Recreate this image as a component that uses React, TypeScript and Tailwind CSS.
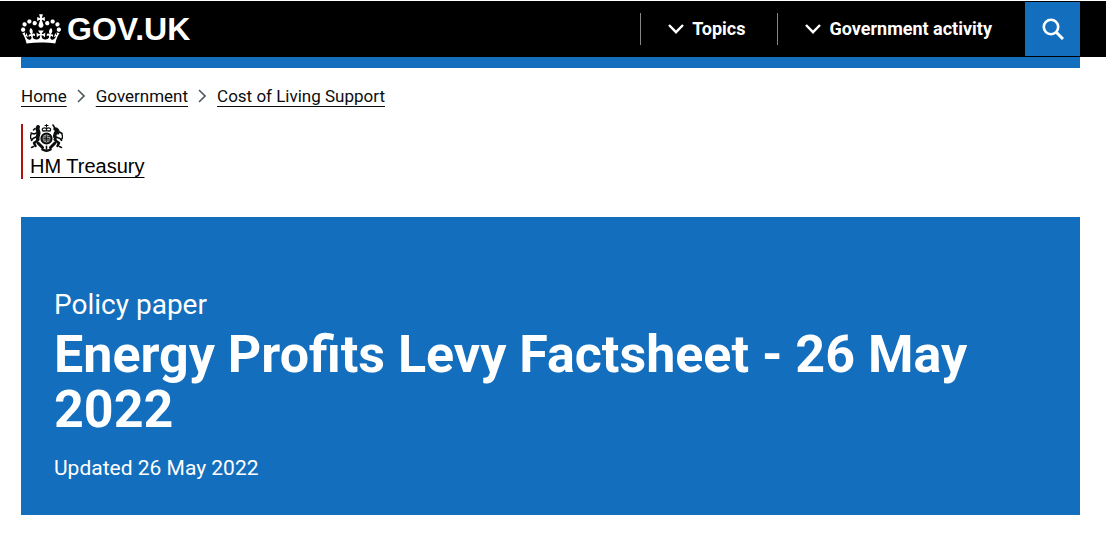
import type { ReactNode } from "react";

const CrownLogo = () => (
  <svg
    viewBox="0 0 132 97"
    className="w-10 h-[30px] shrink-0"
    fill="currentColor"
    aria-hidden="true"
  >
    <path d="M25 30.2c3.5 1.5 7.7-.2 9.1-3.7 1.5-3.6-.2-7.8-3.9-9.2-3.6-1.4-7.6.3-9.1 3.9-1.4 3.5.3 7.5 3.9 9zM9 39.5c3.6 1.5 7.8-.2 9.2-3.7 1.5-3.6-.2-7.8-3.9-9.1-3.6-1.5-7.6.2-9.1 3.8-1.4 3.5.3 7.5 3.8 9zM4.4 57.2c3.5 1.5 7.7-.2 9.1-3.8 1.5-3.6-.2-7.7-3.9-9.1-3.5-1.5-7.6.3-9.1 3.8-1.4 3.5.3 7.6 3.9 9.1zm38.3-21.4c3.5 1.5 7.7-.2 9.1-3.8 1.5-3.6-.2-7.7-3.9-9.1-3.6-1.5-7.6.3-9.1 3.8-1.3 3.6.4 7.7 3.9 9.1zm64.4-5.6c-3.6 1.5-7.8-.2-9.1-3.7-1.5-3.6.2-7.8 3.8-9.2 3.6-1.4 7.7.3 9.2 3.9 1.3 3.5-.4 7.5-3.9 9zm15.9 9.3c-3.6 1.5-7.7-.2-9.1-3.7-1.5-3.6.2-7.8 3.7-9.1 3.6-1.5 7.7.2 9.2 3.8 1.5 3.5-.3 7.5-3.8 9zm4.7 17.7c-3.6 1.5-7.8-.2-9.2-3.8-1.5-3.6.2-7.7 3.9-9.1 3.6-1.5 7.7.3 9.2 3.8 1.3 3.5-.4 7.6-3.9 9.1zM89.3 35.8c-3.6 1.5-7.8-.2-9.2-3.8-1.4-3.6.2-7.7 3.9-9.1 3.6-1.5 7.7.3 9.2 3.8 1.4 3.6-.3 7.7-3.9 9.1zM69.7 17.7l8.9 4.7V9.3l-8.9 2.8c-.2-.3-.5-.6-.9-.9L72.4 0H59.6l3.5 11.2c-.3.3-.6.5-.9.9l-8.8-2.8v13.1l8.8-4.7c.3.3.6.7.9.9l-5 15.4v.1c-.2.8-.4 1.6-.4 2.4 0 4.1 3.1 7.5 7 8.1h.2c.3 0 .7.1 1 .1.4 0 .7 0 1-.1h.2c4-.6 7.1-4.1 7.1-8.1 0-.8-.1-1.7-.4-2.4V34l-5.1-15.4c.4-.2.7-.6 1-.9zM66 92.8c16.9 0 32.8 1.1 47.1 3.2 4-16.9 8.9-26.7 14-33.5l-9.6-3.4c1 4.9 1.1 7.2 0 10.2-1.5-1.4-3-4.3-4.2-8.7L108.6 76c2.8-2 5-3.2 7.5-3.3-4.4 9.4-10 11.9-13.6 11.2-4.3-.8-6.3-4.6-5.6-7.9 1-4.7 5.7-5.9 8-.5 4.3-8.7-3-11.4-7.6-8.8 7.1-7.2 7.9-13.5 2.1-21.1-8 6.1-8.1 12.3-4.5 20.8-4.7-5.4-12.1-2.5-9.5 6.2 3.4-5.2 7.9-2 7.2 3.1-.6 4.3-6.4 7.8-13.5 7.2-10.3-.9-10.9-8-11.2-13.8 2.5-.5 7.1 1.8 11 7.3L80.2 60c-4.1 4.4-8 5.3-12.3 5.4 1.4-4.4 8-11.6 8-11.6H55.5s6.4 7.2 7.9 11.6c-4.2-.1-8-1-12.3-5.4l1.4 16.4c3.9-5.5 8.5-7.7 10.9-7.3-.3 5.8-.9 12.8-11.1 13.8-7.2.6-12.9-2.9-13.5-7.2-.7-5 3.8-8.3 7.1-3.1 2.7-8.7-4.6-11.6-9.4-6.2 3.7-8.5 3.6-14.7-4.6-20.8-5.8 7.6-5 13.9 2.2 21.1-4.7-2.6-11.9.1-7.7 8.8 2.3-5.5 7.1-4.2 8.1.5.7 3.3-1.3 7.1-5.7 7.9-3.5.7-9-1.8-13.5-11.2 2.5.1 4.7 1.3 7.5 3.3l-4.7-15.4c-1.2 4.4-2.7 7.2-4.3 8.7-1.1-3-.9-5.3 0-10.2l-9.5 3.4c5 6.9 9.9 16.7 14 33.5 14.8-2.1 30.8-3.2 47.7-3.2z" />
  </svg>
);

// lion and unicorn either side of the shield, crown on top
const RoyalCrest = () => (
  <svg viewBox="0 0 66 56" className="w-[33px] h-7" aria-hidden="true">
    <g fill="none" stroke="#0b0c0c" strokeLinecap="round" strokeLinejoin="round">
      {/* lion */}
      <path strokeWidth="8" d="M16 6c-3 5 1 7 1 12-1 4-2 8-1 12" />
      <path strokeWidth="3" d="M10 9l-3 3M15 17l-7 3-6-2M14 25l-8 4-3 4M2 21c-2 4-1 8 2 11" />
      <path strokeWidth="5" d="M15 33l-7 5 3 6" />
      <path strokeWidth="3" d="M7 45l-4 2" />
      {/* unicorn */}
      <path strokeWidth="7" d="M50 10c5 0 4 4 1 8-2 4-2 8-1 12" />
      <path strokeWidth="3" d="M49 7l-3-5M56 11c3 4 2 7 0 9M51 19l8-3 5 3M52 26l8 3 3 4M64 21c2 4 1 8-2 11" />
      <path strokeWidth="5" d="M51 33l7 5-3 6" />
      <path strokeWidth="3" d="M59 45l4 2" />
      {/* motto ribbon */}
      <path strokeWidth="6" d="M16 38l9 9M50 38l-9 9" />
      <path strokeWidth="5" d="M25 51c5 3 11 3 16 0" />
      <path strokeWidth="3" d="M33 44v6" />
      {/* crown */}
      <path strokeWidth="2" d="M33 1v5M30 3h6" />
      <path strokeWidth="2.6" d="M26 14c-4-5 2-8 7-5 5-3 11 0 7 5zM33 9v5" />
      {/* shield and garter */}
      <circle cx="33" cy="29" r="13" stroke="#ffffff" strokeWidth="2" fill="#ffffff" />
      <circle cx="33" cy="29" r="10" strokeWidth="4.4" fill="#9a9a9a" />
      <path strokeWidth="1.6" d="M28 26h3M36 25h3M28 32h3M35 32h4M33 23v12M28 29h10" />
    </g>
  </svg>
);

const breadcrumbs = ["Home", "Government", "Cost of Living Support"];

const MenuButton = ({ children }: { children: ReactNode }) => (
  <button
    type="button"
    className="flex h-8 items-center gap-2 border-l border-[#85888b] pl-[27px] text-lg font-bold text-white"
  >
    <svg viewBox="0 0 16 10" className="h-[10px] w-4" aria-hidden="true">
      <path
        d="M1 1l7 7.2L15 1"
        fill="none"
        stroke="currentColor"
        strokeWidth="2.4"
      />
    </svg>
    {children}
  </button>
);

const Header = () => (
  <header className="mt-px bg-black py-px text-white">
    <div className="flex items-center pr-[26px] pl-[21px]">
      <a
        href="#"
        className="mr-auto flex items-center gap-[6px] font-['Liberation_Sans',sans-serif] text-[32px] leading-[54px] font-bold"
      >
        <CrownLogo />
        GOV.UK
      </a>
      <nav aria-label="Main menu" className="flex items-center gap-8">
        <MenuButton>Topics</MenuButton>
        <MenuButton>Government activity</MenuButton>
      </nav>
      <button
        type="button"
        aria-label="Search GOV.UK"
        className="ml-[33px] flex h-[54px] w-[55px] items-center justify-center bg-[#136ebd]"
      >
        <svg viewBox="0 0 22 22" className="size-[22px]" aria-hidden="true">
          <g fill="none" stroke="currentColor" strokeWidth="2.6">
            <circle cx="9" cy="9" r="7.2" />
            <path d="M14 14l7 7" strokeWidth="3" />
          </g>
        </svg>
      </button>
    </div>
  </header>
);

const Breadcrumbs = () => (
  <nav aria-label="Breadcrumb" className="pt-4">
    <ol className="flex items-center text-[17px] leading-6">
      {breadcrumbs.map((crumb, index) => (
        <li key={crumb} className="flex items-center">
          {index > 0 && (
            <svg
              viewBox="0 0 8 14"
              className="mr-[11px] ml-[10px] h-[14px] w-2"
              aria-hidden="true"
            >
              <path
                d="M1 1l6 6-6 6"
                fill="none"
                stroke="#505a5f"
                strokeWidth="1.6"
              />
            </svg>
          )}
          <a href="#" className="underline decoration-1 underline-offset-4">
            {crumb}
          </a>
        </li>
      ))}
    </ol>
  </nav>
);

const App = () => {
  return (
    <div className="bg-white font-[Roboto,sans-serif] text-[#0b0c0c]">
      <Header />
      <div className="mr-[26px] ml-[21px]">
        <div className="h-[11px] bg-[#136ebd]" />
        <Breadcrumbs />
        <a
          href="#"
          className="mt-4 flex w-fit flex-col border-l-2 border-[#af1010] pl-[7px] font-['Liberation_Sans',sans-serif] text-xl leading-[26px] text-black"
        >
          <RoyalCrest />
          <span className="pt-px underline decoration-1 underline-offset-4">
            HM Treasury
          </span>
        </a>
        <main className="mt-[38px] bg-[#136ebd] px-[33px] pt-[70px] pb-8 text-white">
          <p className="text-[28px] leading-9">Policy paper</p>
          <h1 className="mt-1 text-[52px] leading-[55px] font-bold">
            Energy Profits Levy Factsheet - 26 May 2022
          </h1>
          <p className="mt-4 text-[21px] leading-[30px]">Updated 26 May 2022</p>
        </main>
      </div>
    </div>
  );
};

export default App;
